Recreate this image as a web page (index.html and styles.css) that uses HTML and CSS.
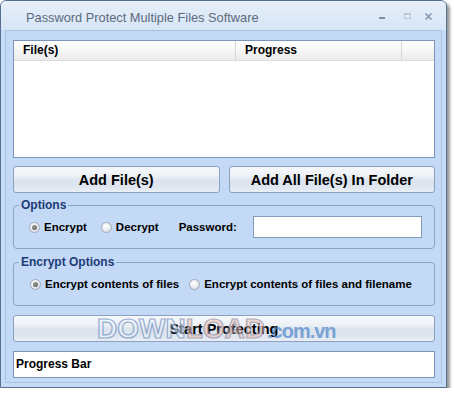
FILE: index.html
```html
<!DOCTYPE html>
<html>
<head>
<meta charset="utf-8">
<link rel="stylesheet" href="styles.css">
</head>
<body>
<div class="window">
  <div class="titlebar">
    <span class="title">Password Protect Multiple Files Software</span>
    <svg class="controls" width="62" height="12" viewBox="0 0 62 12">
      <rect x="6" y="6" width="6" height="2" fill="#7f8fa6"/>
      <rect x="31.5" y="2.5" width="6" height="5" fill="none" stroke="#b9c7d9" stroke-width="1"/>
      <rect x="31" y="2" width="7" height="2" fill="#b9c7d9"/>
      <path d="M52.5 2.5 L58.5 8.5 M58.5 2.5 L52.5 8.5" stroke="#8596ad" stroke-width="1.6" fill="none"/>
    </svg>
  </div>
  <div class="client">
    <div class="list">
      <div class="list-head">
        <div class="col col-file">File(s)</div>
        <div class="col col-progress">Progress</div>
        <div class="col col-rest"></div>
      </div>
    </div>
    <div class="btn-row">
      <button class="btn">Add File(s)</button>
      <button class="btn">Add All File(s) In Folder</button>
    </div>
    <fieldset class="group group-options">
      <legend>Options</legend>
      <div class="row">
        <span class="opt"><span class="radio checked"></span>Encrypt</span>
        <span class="opt opt-gap"><span class="radio"></span>Decrypt</span>
        <span class="pw-label">Password:</span>
        <input class="pw-input" type="text">
      </div>
    </fieldset>
    <fieldset class="group group-enc">
      <legend>Encrypt Options</legend>
      <div class="row">
        <span class="opt"><span class="radio checked"></span>Encrypt contents of files</span>
        <span class="opt opt-gap2"><span class="radio"></span>Encrypt contents of files and filename</span>
      </div>
    </fieldset>
    <div class="start-wrap">
      <button class="btn btn-wide">Start Protecting</button>
      <div class="watermark"><span class="wm-down">DOWN</span><span class="wm-load">LOAD</span><span class="wm-dom">.com.vn</span></div>
    </div>
    <div class="progress">Progress Bar</div>
  </div>
</div>
</body>
</html>
```
FILE: styles.css
```css
html, body {
  margin: 0;
  padding: 0;
  background: #ffffff;
}
body {
  font-family: "Liberation Sans", Arial, sans-serif;
  color: #000;
}
.window {
  width: 447px;
  height: 388px;
  box-sizing: border-box;
  border: 1px solid #56708f;
  border-radius: 6px 6px 0 0;
  background: #c6dbf5;
  box-shadow: 3px 3px 3px rgba(0, 0, 0, 0.4);
  display: flex;
  flex-direction: column;
  overflow: hidden;
}
.titlebar {
  height: 29px;
  flex: none;
  box-sizing: border-box;
  display: flex;
  align-items: center;
  padding: 3px 11px 0 25px;
  background: linear-gradient(#e6eff9, #d6e5f6);
}
.title {
  font-size: 12.8px;
  color: #5c6a7d;
  white-space: nowrap;
}
.controls {
  margin-left: auto;
  display: block;
}
.client {
  flex: 1;
  margin: 0 4px 4px 4px;
  border: 1px solid #a9c2e2;
  background: #c3d9f5;
  padding: 9px 6px 4px 7px;
  display: flex;
  flex-direction: column;
}
.list {
  height: 118px;
  box-sizing: border-box;
  border: 1px solid #7b96b8;
  background: #ffffff;
}
.list-head {
  height: 20px;
  display: flex;
  background: linear-gradient(#ffffff, #f3f3f3 60%, #ebebeb);
  border-bottom: 1px solid #dcdcdc;
  box-sizing: border-box;
}
.col {
  font-size: 12px;
  font-weight: bold;
  line-height: 19px;
  box-sizing: border-box;
  border-right: 1px solid #d6d6d6;
  padding-left: 9px;
}
.col-file { width: 222px; }
.col-progress { width: 166px; }
.col-rest { flex: 1; border-right: none; }
.btn-row {
  display: grid;
  grid-template-columns: 1fr 1fr;
  column-gap: 9px;
  margin-top: 8px;
}
.btn {
  height: 27px;
  margin: 0;
  padding: 0;
  box-sizing: border-box;
  border: 1px solid #8aa1bf;
  border-radius: 3px;
  background: linear-gradient(#f6f8fb 0%, #edf1f6 35%, #dbe3ed 55%, #dfe6ef 80%, #eaeff5 100%);
  font-family: "Liberation Sans", Arial, sans-serif;
  font-size: 14.5px;
  font-weight: bold;
  color: #000;
}
.group {
  margin: 5px 0 0 0;
  padding: 4px 12px 10px 5px;
  border: 1px solid #8aa4c6;
  border-radius: 4px;
  min-width: 0;
}
.group legend {
  padding: 0 2px;
  font-size: 12px;
  font-weight: bold;
  line-height: 14px;
  color: #1d3c76;
}
.group-enc {
  margin-top: 6px;
  padding-top: 7px;
  padding-bottom: 13px;
}
.row {
  display: flex;
  align-items: center;
  padding-left: 10px;
  height: 22px;
  font-size: 11.5px;
  font-weight: bold;
}
.group-enc .row {
  height: 16px;
  padding-left: 11px;
}
.opt {
  display: flex;
  align-items: center;
  white-space: nowrap;
}
.opt-gap { margin-left: 14px; }
.opt-gap2 { margin-left: 10px; }
.radio {
  width: 11px;
  height: 11px;
  box-sizing: border-box;
  border-radius: 50%;
  border: 1px solid #a3aab5;
  background: radial-gradient(circle at 40% 35%, #ffffff 0%, #eceff2 45%, #cdd3da 100%);
  margin-right: 4px;
  position: relative;
  flex: none;
}
.radio.checked::after {
  content: "";
  position: absolute;
  left: 2px;
  top: 2px;
  width: 5px;
  height: 5px;
  border-radius: 50%;
  background: radial-gradient(circle at 40% 35%, #9a9a9a, #555555);
}
.pw-label {
  margin-left: 20px;
  white-space: nowrap;
}
.pw-input {
  margin: 0 0 0 auto;
  width: 169px;
  height: 22px;
  box-sizing: border-box;
  border: 1px solid #7f9db9;
  background: #ffffff;
  padding: 0;
}
.start-wrap {
  position: relative;
  margin-top: 9px;
}
.btn-wide {
  width: 100%;
  display: block;
}
.watermark {
  position: absolute;
  left: 84px;
  top: 1px;
  height: 26px;
  display: flex;
  align-items: baseline;
  line-height: 26px;
  opacity: 0.7;
  pointer-events: none;
  white-space: nowrap;
}
.wm-down, .wm-load {
  font-family: "Liberation Sans", Arial, sans-serif;
  font-size: 28px;
  font-weight: bold;
}
.wm-down {
  color: rgba(235, 243, 252, 0.85);
  -webkit-text-stroke: 1.2px #6f8fbd;
}
.wm-load {
  color: rgba(238, 190, 172, 0.8);
  -webkit-text-stroke: 1.2px #8f8ea8;
}
.wm-dom {
  font-family: "Liberation Sans", Arial, sans-serif;
  font-size: 20px;
  font-weight: bold;
  letter-spacing: -1px;
  color: #4f86cc;
  margin-left: 2px;
}
.progress {
  margin-top: 9px;
  height: 27px;
  box-sizing: border-box;
  border: 1px solid #7b96b8;
  background: #ffffff;
  font-size: 12px;
  font-weight: bold;
  line-height: 25px;
  padding-left: 2px;
}
```
